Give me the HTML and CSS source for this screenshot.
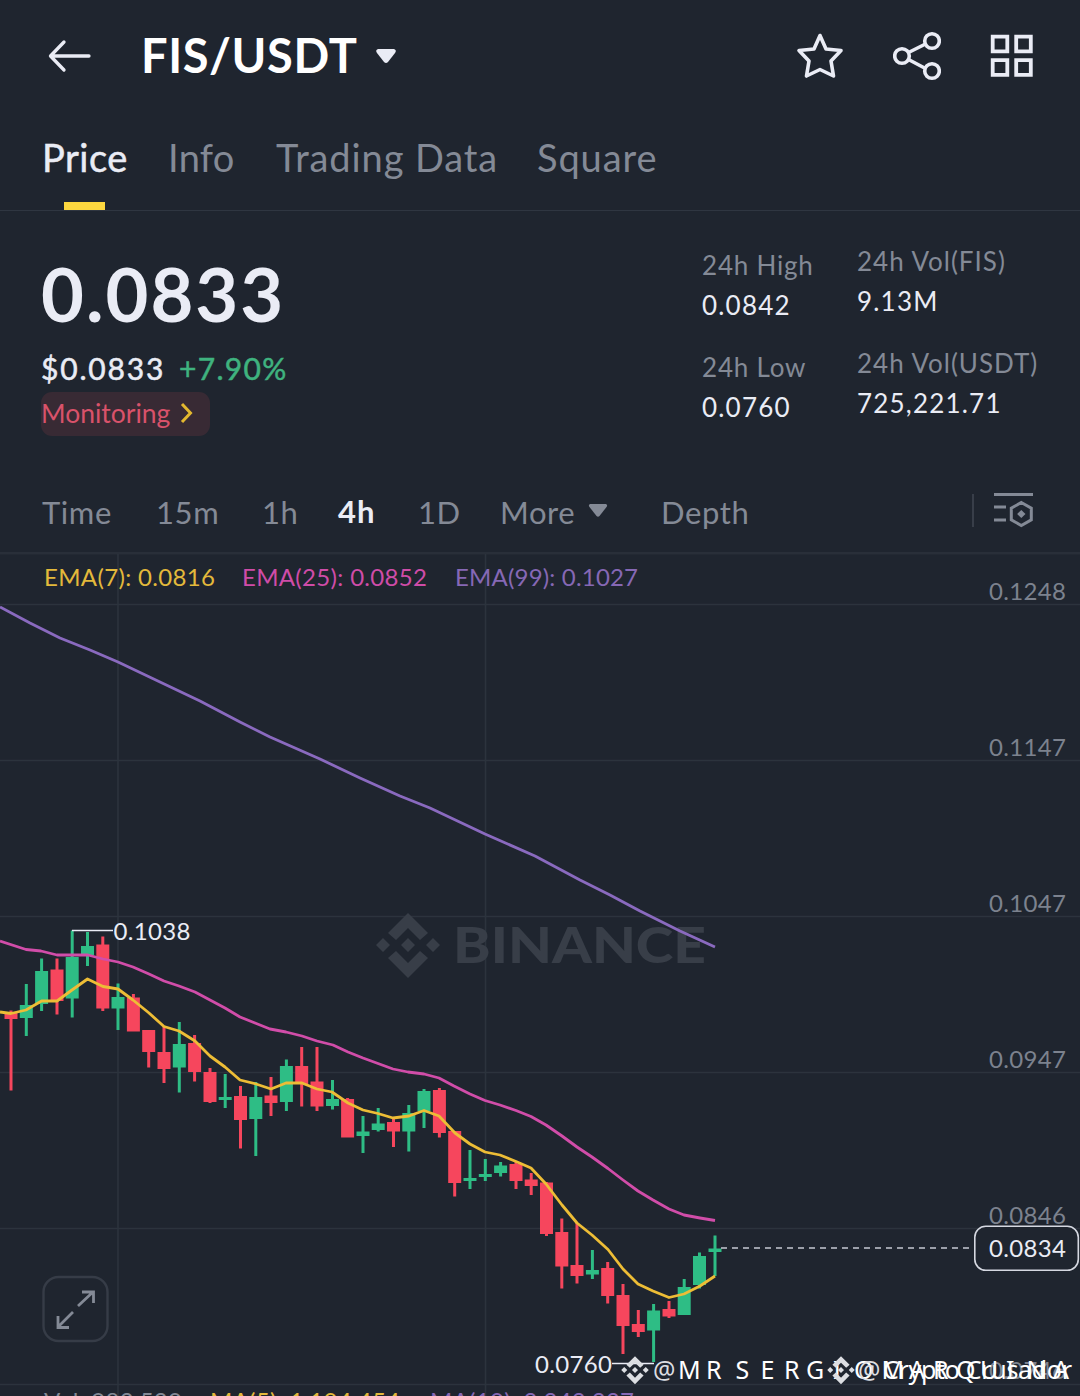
FILE: index.html
```html
<!DOCTYPE html>
<html lang="en">
<head>
<meta charset="utf-8">
<title>FIS/USDT</title>
<link rel="stylesheet" href="styles.css">
</head>
<body>
<header class="topbar">
  <svg class="back" width="44" height="34" viewBox="0 0 44 34"><path d="M16 3 2.500 17 16 31M3 17h38" /></svg>
  <h1 class="pair">FIS/USDT</h1>
  <svg class="caret" width="24" height="18" viewBox="0 0 24 18"><path d="M4 2h16q3 1 1 4l-7 9q-2 2-4 0L3 6Q1 3 4 2z"/></svg>
  <div class="actions">
    <svg width="48" height="48" viewBox="0 0 48 48"><path d="M24 3.500 30 17 45 18.500 35 29 37.500 44 24 37.500 10.500 44 13 29 3 18.500 18 17z"/></svg>
    <svg width="48" height="50" viewBox="0 0 48 50"><circle cx="9" cy="25" r="7.300"/><circle cx="39" cy="10" r="7.300"/><circle cx="39" cy="40" r="7.300"/><path d="m15.500 21.500 17-8.500M15.500 28.500l17 9"/></svg>
    <svg class="squares" width="44" height="44" viewBox="0 0 44 44"><path d="M2.700 2.700h14.600v14.600H2.700zM26.200 2.700h14.600v14.600H26.200zM2.700 26.200h14.600v14.600H2.700zM26.200 26.200h14.600v14.600H26.200z"/></svg>
  </div>
</header>
<nav class="tabs">
  <a class="tab active">Price</a><a class="tab info">Info</a><a class="tab">Trading Data</a><a class="tab">Square</a>
</nav>
<section class="summary">
  <div class="quote">
    <div class="last">0.0833</div>
    <div class="change"><span class="fiat">$0.0833</span><span class="pct">+7.90%</span></div>
    <div class="tag"><span>Monitoring</span><svg width="14" height="22" viewBox="0 0 14 22"><path d="m2 2 8.500 9L2 20"/></svg></div>
  </div>
  <dl class="stats">
    <div><dt>24h High</dt><dd>0.0842</dd></div>
    <div><dt>24h Low</dt><dd>0.0760</dd></div>
  </dl>
  <dl class="stats volumes">
    <div><dt>24h Vol(FIS)</dt><dd>9.13M</dd></div>
    <div><dt>24h Vol(USDT)</dt><dd>725,221.71</dd></div>
  </dl>
</section>
<div class="intervals">
  <span>Time</span><span>15m</span><span>1h</span><span class="on">4h</span><span>1D</span>
  <span class="more">More<svg width="20" height="15" viewBox="0 0 20 15"><path d="M2 1h16q2 1 .5 3l-7 9q-1.500 1.500-3 0l-7-9Q0 2 2 1z"/></svg></span>
  <span>Depth</span>
  <svg class="settings" width="42" height="38" viewBox="0 0 42 38"><path d="M1 4.500h39M1 17h12M1 30h12M28.300 12.500l10 5.700v11.600l-10 5.700-10-5.700V18.200z"/><path class="dot" d="m28.300 20 4.200 4-4.200 4-4.200-4z"/></svg>
</div>
<main class="chart">
<svg width="1080" height="844" viewBox="0 552 1080 844">
  <defs>
    <g id="mark"><path d="M-20-12 0-32 20-12 12-5 0-17-12-5zM-20 13-12 6 0 18 12 6 20 13 0 33zM0-7 7 0 0 7-7 0zM-25-7-18 0-25 7-32 0zM25-7 32 0 25 7 18 0z"/></g>
  </defs>
  <path class="grid top" d="M0 553H1080"/>
  <path class="grid" d="M118 554V1396M485.500 554V1396M0 604.500H1080M0 760.500H1080M0 916.500H1080M0 1072.500H1080M0 1228.500H1080M0 1384.500H1080"/>
  <g class="brand"><use href="#mark" transform="translate(408 945)"/><text x="453" y="963" textLength="253" lengthAdjust="spacingAndGlyphs">BINANCE</text></g>
  <g class="axis">
    <text x="989" y="599.500" textLength="77">0.1248</text><text x="989" y="755.500" textLength="77">0.1147</text><text x="989" y="911.500" textLength="77">0.1047</text><text x="989" y="1067.500" textLength="77">0.0947</text><text x="989" y="1223.500" textLength="77">0.0846</text><text x="989" y="1379" textLength="77">0.0746</text>
  </g>
  <g class="legend">
    <text class="y" x="44" y="585.500" textLength="171">EMA(7): 0.0816</text><text class="p" x="242" y="585.500" textLength="185">EMA(25): 0.0852</text><text class="u" x="455" y="585.500" textLength="183">EMA(99): 0.1027</text>
    <text class="g" x="44" y="1410" textLength="138">Vol: 982,520</text><text class="y" x="210" y="1410" textLength="190">MA(5): 1,104,454</text><text class="u" x="430" y="1410" textLength="204">MA(10): 2,242,227</text>
  </g>
  <path class="wick down" d="M11 1010.500V1090.500M57 958.500V1014.500M102.800 936.500V1011M133.400 994V1031M148.700 1030V1067.500M164 1027V1083M194.600 1035V1081.500M210 1068V1103M240.500 1086V1148.500M271 1077V1116M301.700 1047V1106.500M317 1047V1111M347.600 1098V1137M393.500 1117V1147M439.400 1088V1137.500M454.700 1131V1196.500M516 1162V1189M531.200 1173V1195M546.500 1182V1236M561.800 1218.500V1288.500M577 1223V1283.500M607.700 1262V1303.500M623 1284V1354M638.300 1310V1337M669 1301V1318"/>
  <path class="wick up" d="M26.300 984V1036M41.600 958.500V1011M72.200 930.500V1017.500M87.500 932V966M118 983.500V1030M179.300 1022V1092.500M225.200 1074V1108M255.800 1082V1156M286.400 1059.500V1111M332.500 1080V1109.500M363 1116V1153M378.200 1108V1131.500M408.800 1105V1151.500M424 1089V1128M470 1150V1189M485.300 1159V1181M500.600 1162V1176.500M592.400 1250V1279M653.600 1304V1362M684.200 1279V1315M699.500 1252.500V1288.500M715 1235.500V1276"/>
  <path class="body down" d="M11 1013V1019M57 969.500V1001M102.800 944.500V1008.500M133.400 997.500V1031.500M148.700 1030V1052M164 1052V1069M194.600 1043V1072M210 1072V1102M240.500 1096V1120M271 1095.500V1103M301.700 1066V1084M317 1081.500V1106.500M347.600 1099V1137.500M393.500 1122V1131.500M439.400 1090V1133M454.700 1131V1183M516 1164V1181M531.200 1179.500V1186M546.500 1182.500V1234M561.800 1232V1266.500M577 1265V1276M607.700 1268V1296M623 1295V1326M638.300 1324V1332M669 1309V1316.500"/>
  <path class="body up" d="M26.300 1005V1018M41.600 971V1004M72.200 957V998.500M87.500 946V955M118 997V1008.500M179.300 1044V1067.500M225.200 1097V1100M255.800 1097V1119M286.400 1066V1102M332.500 1099V1106M363 1131.500V1136M378.200 1123.500V1130M408.800 1113V1131.500M424 1091V1111M470 1178V1181M485.300 1174V1177M500.600 1165.500V1173M592.400 1270V1274.500M653.600 1310.500V1330.500M684.200 1287V1315M699.500 1256V1285M715 1248.500V1252"/>
  <path class="line u" d="M0 607 30 623 60 638 90 650 118 662 160 682 200 701 240 722 270 737 320 759 360 778 400 796 430 808 485 834 535 856 580 880 610 895 640 911 680 931 715 947"/>
  <path class="line p" d="M0 941 26 949.500 41 951 57 955H88L103 959 118 962 133 967 149 974 164 981 179 986 195 992 210 1000 225 1008 240 1017 255 1023 270 1029 286 1032 302 1036 317 1041 333 1045 348 1052 363 1058 378 1063.500 393 1069 408 1072 424 1074 439 1078 454 1086 470 1094 485 1100.500 500 1105 516 1110.500 531 1116.500 546 1125 562 1136 577 1147 592 1157 608 1168.500 623 1180 638 1191 653 1200 669 1209 684 1215 700 1218 715 1220.500"/>
  <path class="line y" d="M0 1012 11 1013.500 26 1010 41.600 1001H57L72 990 87.500 979 103 986.500 118 989 133 1000 149 1013 164 1026.500 179 1031 195 1041 210 1056 225 1067 240 1080 256 1084 271 1089 286 1083H302L317 1089 332 1092 348 1103 363 1110 378 1113.500 393 1118 409 1116 424 1110.500 439 1116 455 1133 470 1144 485 1152 500 1155 516 1161.500 531 1168 546 1184 562 1205 577 1223 592 1235 608 1249.500 623 1269 638 1284 653 1291 669 1297.500 684 1294 700 1286 715 1276"/>
  <path class="pointer" d="M72 930.500H113M612 1363.500H654"/>
  <path class="pointer dashed" d="M721 1248H972"/>
  <rect class="pricebox" x="974.800" y="1226.300" width="103.500" height="44" rx="11"/>
  <g class="labels"><text x="989" y="1256.500" textLength="77">0.0834</text><text x="113.500" y="939.500" textLength="77">0.1038</text><text x="535" y="1372.500" textLength="77">0.0760</text></g>
  <g class="expand"><rect x="43.500" y="1277" width="64" height="64" rx="15"/><path d="M78 1306 93 1292M82 1292H93.500V1303M73 1312 58 1327M58 1316V1327.500H69"/></g>
  <g class="credit">
    <use href="#mark" transform="translate(635 1370) scale(.43)"/><text class="at" x="653" y="1379">@</text>
    <text x="678 706">MR</text><text x="735.500 760.500 784 806 833 854">SERGIO</text><text x="881.500 909 933 956 980 1006 1026.500 1053">MARQUINA</text>
    <use href="#mark" transform="translate(841 1370) scale(.43)"/><text class="at" x="858" y="1379">@</text><text x="883" y="1379" textLength="189">Crypto Crusador</text>
  </g>
</svg>
</main>
</body>
</html>
```
FILE: styles.css
```css
* { box-sizing: border-box; }
body { margin: 0; width: 1080px; height: 1396px; overflow: hidden; background: #1f252f; color: #eaecf5; font-family: Lato, "Liberation Sans", sans-serif; }
svg { display: block; fill: none; flex: none; }

.topbar { height: 110px; display: flex; align-items: center; padding: 1px 46px 0 48px; }
.back { stroke: #eaecf5; stroke-width: 3.3; stroke-linecap: round; stroke-linejoin: round; }
.pair { margin: -2px 0 0 49px; width: 233px; font-size: 47px; line-height: 60px; font-weight: 700; letter-spacing: .6px; color: #fff; white-space: nowrap; }
.caret { fill: #eaecf5; margin-top: 1px; }
.actions { margin-left: auto; display: flex; align-items: center; gap: 49px; stroke: #eaecf5; stroke-width: 3.6; stroke-linejoin: round; }
.squares { stroke-width: 3.8; stroke-linejoin: miter; }

.tabs { height: 101px; padding-left: 42px; display: grid; grid-template-columns: 126px 108px 261px 200px; border-bottom: 1px solid #2f3641; font-size: 38px; line-height: 95px; letter-spacing: .9px; color: #848a96; }
.tab { display: flex; flex-direction: column; white-space: nowrap; }
.info { letter-spacing: .3px; }
.active { color: #eaecf5; letter-spacing: .5px; -webkit-text-stroke: .5px #eaecf5; }
.active::after { content: ""; width: 41px; height: 8px; margin: -3px 0 0 22px; background: #fcd73f; }

.summary { height: 269px; display: grid; grid-template-columns: 660px 155px 1fr; padding-left: 42px; }
.last { margin: 39px 0 0 -1px; font-size: 74px; line-height: 88px; font-weight: 700; letter-spacing: 2px; }
.change { display: flex; margin: 15px 0 0 -1px; font-size: 30px; line-height: 30px; letter-spacing: 1.8px; -webkit-text-stroke: .5px; }
.fiat { width: 138px; }
.pct { color: #3fb37f; letter-spacing: 1.3px; }
.tag { margin: 9px 0 0 -1px; width: 169px; height: 44px; border-radius: 11px; background: #382a34; display: flex; align-items: center; gap: 9px; color: #d9526a; font-size: 26.5px; line-height: 42px; padding-bottom: 2px; }
.tag svg { stroke: #e3b82f; stroke-width: 3; }
.tag span { width: 130px; }
.stats { margin: 34px 0 0; font-size: 26px; line-height: 40px; letter-spacing: .8px; }
.stats > div { height: 102px; }
.volumes { margin-top: 30px; letter-spacing: 1px; }
dt { color: #848a96; white-space: nowrap; }
dd { margin: 0; letter-spacing: 1.2px; }

.intervals { height: 72px; padding-left: 42px; display: grid; grid-template-columns: 114px 106px 76px 80px 82px 161px 332px 1fr; font-size: 31px; line-height: 65px; letter-spacing: .6px; color: #848a96; }
.on { color: #eaecf5; font-weight: 700; line-height: 63px; letter-spacing: 1px; }
.more { display: flex; }
.more svg { fill: #848a96; margin: 23px 0 0 13px; }
.settings { margin-top: 10px; stroke: #848a96; stroke-width: 3; }
.settings .dot { fill: #848a96; stroke: none; }
.intervals > span:nth-child(7) { background: linear-gradient(#383e49, #383e49) 311px 14px / 2px 33px no-repeat; }

.chart { height: 844px; }
.grid { stroke: #2c333d; stroke-width: 1.6; }
.top { stroke: #292f39; stroke-width: 3; }
.brand { fill: #383e48; font-size: 49px; font-weight: 900; }
.axis { fill: #7c828e; font-size: 24px; }
.legend, .labels { font-size: 24px; }
.legend .y { fill: #e3b93b; }
.legend .p { fill: #cf4ca8; }
.legend .u { fill: #8668b5; }
.legend .g { fill: #848a96; }
.labels { fill: #eaecf5; }
.wick { stroke-width: 3; }
.body { stroke-width: 13; }
.down { stroke: #f6465d; }
.up { stroke: #2ebd85; }
.line { stroke-width: 2.8; stroke-linejoin: round; }
.line.u { stroke: #8a6abf; }
.line.p { stroke: #d14da9; }
.line.y { stroke: #edbd36; }
.pointer { stroke: #eaecf5; stroke-width: 1.5; }
.dashed { stroke: #c6c9d3; stroke-dasharray: 6 5; }
.pricebox { fill: #1f252f; stroke: #d5d8e1; stroke-width: 1.6; }
.expand rect { stroke: #363c47; stroke-width: 2.4; }
.expand path { stroke: #848a96; stroke-width: 2.8; }
.credit { font-family: "Noto Sans", sans-serif; font-size: 25px; fill: #fff; }
.credit text:not(.at):not([textLength]) { transform: translateY(1379px); }
.credit use, .at { fill: #dcdee2; }
```
